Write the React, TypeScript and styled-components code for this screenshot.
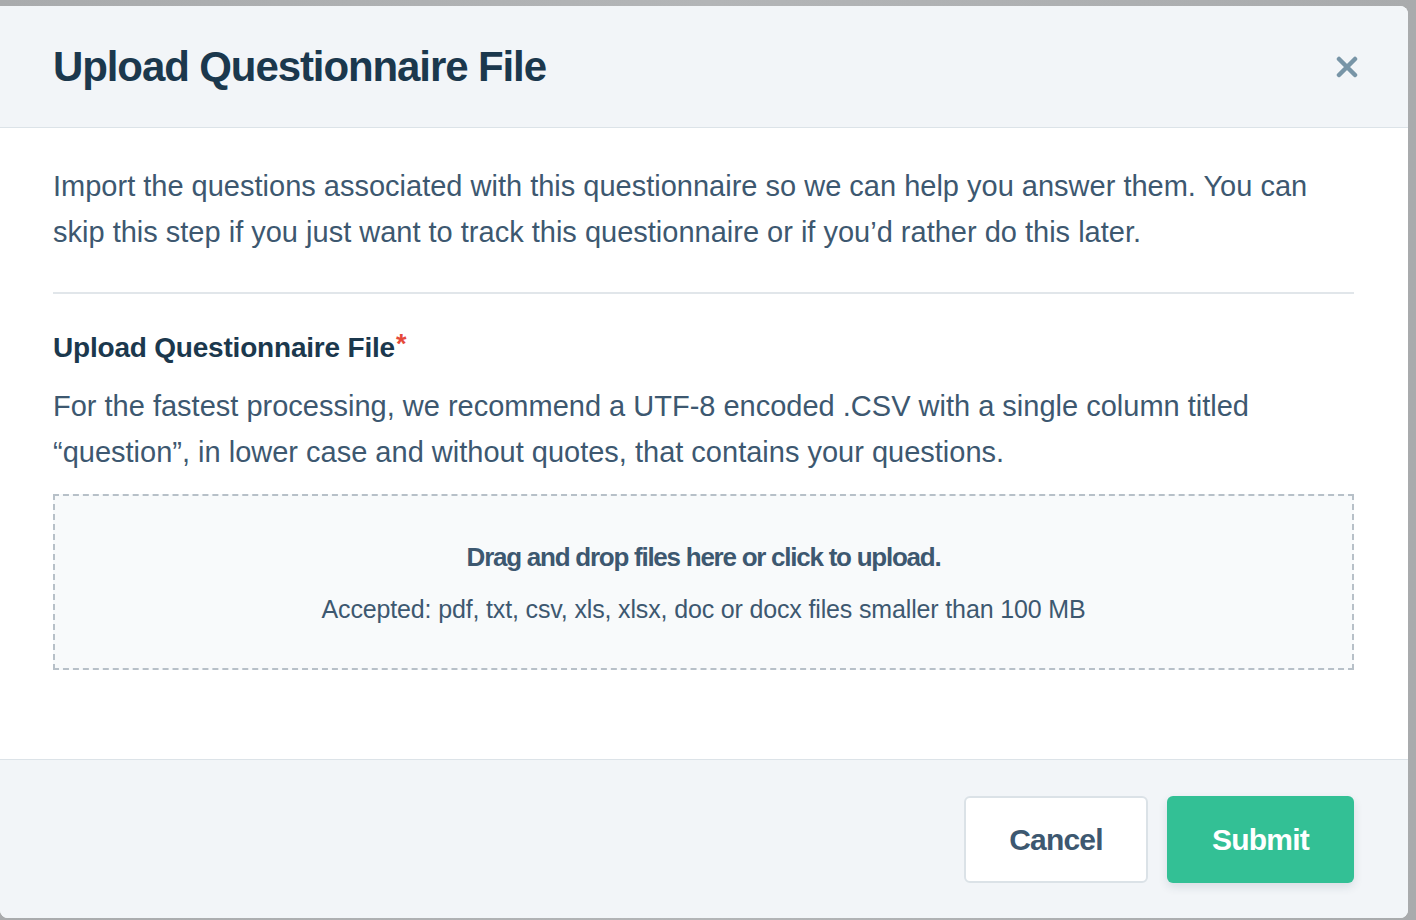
import { FunctionComponent } from "react";
import styled, { createGlobalStyle } from "styled-components";

const GlobalStyle = createGlobalStyle`
  html, body {
    margin: 0;
    padding: 0;
    background: #a9abad;
  }
  body {
    font-family: "Liberation Sans", Arial, sans-serif;
    -webkit-font-smoothing: antialiased;
  }
`;

const Page = styled.div`
  width: 1416px;
  height: 920px;
  box-sizing: border-box;
  padding: 6px 8px 2px 0;
  display: flex;
  background: linear-gradient(90deg, #a9abad 0%, #b3b5b7 50%, #a9abad 100%);
`;

const Modal = styled.div`
  flex: 1;
  display: flex;
  flex-direction: column;
  border-radius: 0 8px 8px 8px;
  overflow: hidden;
  background: #ffffff;
`;

const Header = styled.div`
  height: 122px;
  box-sizing: border-box;
  display: flex;
  flex-direction: row;
  align-items: center;
  justify-content: space-between;
  padding: 0 46px 0 53px;
  background: #f2f5f8;
  border-bottom: 1px solid #dce3e8;
`;

const Title = styled.h1`
  margin: 0;
  font-size: 42px;
  font-weight: 700;
  letter-spacing: -1.1px;
  color: #1b384d;
`;

const CloseButton = styled.button`
  width: 30px;
  height: 30px;
  padding: 0;
  border: 0;
  background: transparent;
  display: flex;
  align-items: center;
  justify-content: center;
  cursor: pointer;
`;

const Body = styled.div`
  flex: 1;
  display: flex;
  flex-direction: column;
  padding: 35px 54px 0 53px;
`;

const Paragraph = styled.p<{ $after?: number }>`
  margin: 0 0 ${(p) => p.$after ?? 0}px;
  font-size: 29px;
  line-height: 46px;
  letter-spacing: 0;
  color: #3d5870;
`;

const Divider = styled.hr`
  margin: 0 0 34px;
  border: 0;
  border-top: 2px solid #e1e6ea;
`;

const Label = styled.div`
  font-size: 28px;
  line-height: 40px;
  font-weight: 700;
  letter-spacing: -0.2px;
  color: #1b384d;
  margin-bottom: 15px;
`;

const Required = styled.span`
  color: #e5493a;
  font-size: 27px;
  vertical-align: top;
  line-height: 32px;
  margin-left: 1px;
`;

const DropZone = styled.div`
  height: 176px;
  box-sizing: border-box;
  margin-top: 19px;
  border: 2px dashed #b7c0c8;
  background: #f8fafb;
  display: flex;
  flex-direction: column;
  align-items: center;
  justify-content: center;
  gap: 16px;
  padding-top: 2px;
  cursor: pointer;
`;

const DropTitle = styled.div`
  font-size: 26px;
  line-height: 36px;
  font-weight: 700;
  letter-spacing: -1.25px;
  color: #3d5870;
`;

const DropHint = styled.div`
  font-size: 25px;
  line-height: 36px;
  letter-spacing: -0.15px;
  color: #3d5870;
`;

const Footer = styled.div`
  height: 159px;
  box-sizing: border-box;
  display: flex;
  flex-direction: row;
  justify-content: flex-end;
  align-items: flex-start;
  gap: 19px;
  padding: 36px 54px 0 0;
  background: #f2f5f8;
  border-top: 1px solid #dce3e8;
`;

const Button = styled.button<{ $primary?: boolean; $width: number }>`
  width: ${(p) => p.$width}px;
  height: 87px;
  border-radius: 6px;
  font-family: "Liberation Sans", Arial, sans-serif;
  font-size: 30px;
  font-weight: 700;
  letter-spacing: -0.8px;
  cursor: pointer;
  border: ${(p) => (p.$primary ? "0" : "2px solid #dbe2e7")};
  background: ${(p) => (p.$primary ? "#33c095" : "#ffffff")};
  color: ${(p) => (p.$primary ? "#ffffff" : "#3d5870")};
  box-shadow: ${(p) => (p.$primary ? "0 4px 10px rgba(30, 60, 80, 0.12)" : "none")};
`;

const CloseIcon: FunctionComponent = () => (
  <svg width="22" height="22" viewBox="0 0 22 22">
    <path
      d="M3 3 L19 19 M19 3 L3 19"
      stroke="#7895a7"
      strokeWidth="4.5"
      strokeLinecap="round"
    />
  </svg>
);

const App: FunctionComponent = () => {
  return (
    <>
      <GlobalStyle />
      <Page>
        <Modal>
          <Header>
            <Title>Upload Questionnaire File</Title>
            <CloseButton aria-label="Close">
              <CloseIcon />
            </CloseButton>
          </Header>
          <Body>
            <Paragraph $after={37}>
              Import the questions associated with this questionnaire so we can help you answer
              them. You can skip this step if you just want to track this questionnaire or if
              you’d rather do this later.
            </Paragraph>
            <Divider />
            <Label>
              Upload Questionnaire File<Required>*</Required>
            </Label>
            <Paragraph>
              For the fastest processing, we recommend a UTF-8 encoded .CSV with a single column
              titled “question”, in lower case and without quotes, that contains your questions.
            </Paragraph>
            <DropZone>
              <DropTitle>Drag and drop files here or click to upload.</DropTitle>
              <DropHint>
                Accepted: pdf, txt, csv, xls, xlsx, doc or docx files smaller than 100 MB
              </DropHint>
            </DropZone>
          </Body>
          <Footer>
            <Button $width={184}>Cancel</Button>
            <Button $primary $width={187}>
              Submit
            </Button>
          </Footer>
        </Modal>
      </Page>
    </>
  );
};

export default App;
